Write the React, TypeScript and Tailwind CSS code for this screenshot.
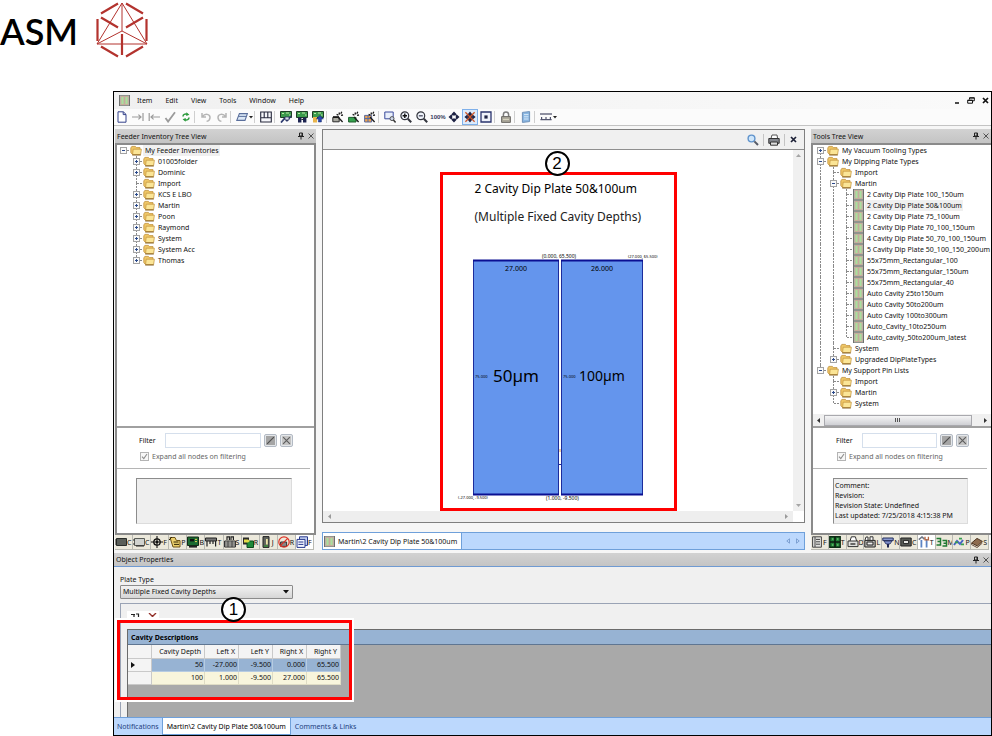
import React from "react";

type Node = {
  label: string;
  plate?: boolean;
  closed?: boolean;
  selected?: boolean;
  children?: Node[];
};

const feederTree: Node[] = [
  {
    label: "My Feeder Inventories",
    selected: true,
    children: [
      { label: "01005folder", closed: true },
      { label: "Dominic", closed: true },
      { label: "Import" },
      { label: "KCS E LBO", closed: true },
      { label: "Martin", closed: true },
      { label: "Poon", closed: true },
      { label: "Raymond", closed: true },
      { label: "System", closed: true },
      { label: "System Acc", closed: true },
      { label: "Thomas", closed: true },
    ],
  },
];

const toolsTree: Node[] = [
  { label: "My Vacuum Tooling Types", closed: true },
  {
    label: "My Dipping Plate Types",
    children: [
      { label: "Import" },
      {
        label: "Martin",
        children: [
          { label: "2 Cavity Dip Plate 100_150um", plate: true },
          { label: "2 Cavity Dip Plate 50&100um", plate: true, selected: true },
          { label: "2 Cavity Dip Plate 75_100um", plate: true },
          { label: "3 Cavity Dip Plate 70_100_150um", plate: true },
          { label: "4 Cavity Dip Plate 50_70_100_150um", plate: true },
          { label: "5 Cavity Dip Plate 50_100_150_200um", plate: true },
          { label: "55x75mm_Rectangular_100", plate: true },
          { label: "55x75mm_Rectangular_150um", plate: true },
          { label: "55x75mm_Rectangular_40", plate: true },
          { label: "Auto Cavity 25to150um", plate: true },
          { label: "Auto Cavity 50to200um", plate: true },
          { label: "Auto Cavity 100to300um", plate: true },
          { label: "Auto_Cavity_10to250um", plate: true },
          { label: "Auto_cavity_50to200um_latest", plate: true },
        ],
      },
      { label: "System" },
      { label: "Upgraded DipPlateTypes", closed: true },
    ],
  },
  {
    label: "My Support Pin Lists",
    children: [{ label: "Import" }, { label: "Martin", closed: true }, { label: "System" }],
  },
];

const columns = ["Cavity Depth", "Left X", "Left Y", "Right X", "Right Y"];
const rows = [
  ["50", "-27.000", "-9.500", "0.000", "65.500"],
  ["100", "1.000", "-9.500", "27.000", "65.500"],
];

/* ---------- icons ---------- */

function Icon({ size = 12, children }: { size?: number; children: React.ReactNode }) {
  return (
    <svg width={size} height={size} viewBox="0 0 12 12" fill="none" className="block shrink-0">
      {children}
    </svg>
  );
}

function FolderIcon() {
  return (
    <svg width="12" height="11" viewBox="0 0 12 11" className="block shrink-0">
      <path d="M.8 3 1.8 1.4h3.600l1 1.200H10v6.600H2.200L.8 7.600z" fill="#efc766" stroke="#c1923c" strokeWidth=".8" />
      <path d="M3.200 4.200h8.200L10.600 9.600H2.600z" fill="#fbe596" stroke="#c1923c" strokeWidth=".7" />
      <path d="M2.200 10h8.600" stroke="#7d5a1c" strokeWidth=".9" />
    </svg>
  );
}

function PlateIcon() {
  return (
    <svg width="11" height="11" viewBox="0 0 11 11" className="block shrink-0">
      <path d="M0 0h11v11H0z" fill="#6e706e" />
      <path d="M1 .5h9v10H1z" fill="#b3b8b0" />
      <path d="M2 1.500h3v8H2zM6 1.500h3v8H6z" fill="#a9dfa0" stroke="#d99c90" strokeWidth=".6" />
    </svg>
  );
}

function Branch({ up, down, box }: { up: boolean; down: boolean; box?: "+" | "-" }) {
  return (
    <svg width="13" height="11" viewBox="0 0 13 11" className="block shrink-0" shapeRendering="crispEdges">
      <g stroke="#8a8a8a" strokeDasharray="2 1">
        {up && <path d="M6.5 0v5.5" />}
        {down && <path d="M6.5 5v6" />}
        <path d="M6.5 5.5H13" />
      </g>
      {box && (
        <>
          <path d="M3.5 2.5h6v6h-6z" fill="#fafafa" stroke="#a3a3a3" />
          <path d="M5 5.5h3" stroke="#2b4a8c" />
          {box === "+" && <path d="M6.5 4v3" stroke="#2b4a8c" />}
        </>
      )}
    </svg>
  );
}

function Guide({ on }: { on: boolean }) {
  return (
    <svg width="13" height="11" viewBox="0 0 13 11" className="block shrink-0" shapeRendering="crispEdges">
      {on && <path d="M6.5 0v11" stroke="#8a8a8a" strokeDasharray="2 1" />}
    </svg>
  );
}

function Pin() {
  return (
    <svg width="6" height="8" viewBox="0 0 6 8" className="block" fill="none">
      <path d="M1.5 1h3v3h-3zM0 4.500h6M3 4.500V7.500" stroke="#222" />
      <path d="M4 1v3" stroke="#222" />
    </svg>
  );
}

function Cross() {
  return (
    <svg width="6" height="6" viewBox="0 0 6 6" className="block">
      <path d="m.5.5 5 5M5.5.5l-5 5" stroke="#444" strokeWidth=".9" />
    </svg>
  );
}

const wand = <path d="m6 6 4.6 5M7 1.5l.6 2M9.8.8l-1 2M4.6 3.4l1.8.8M11 4l-2 .4" stroke="#1c1c1c" strokeWidth="1.3" />;

const boardBase = (
  <>
    <path d="M.5.5h11v6H.5z" fill="#3b9b4c" stroke="#1f3d26" />
    <path d="M2 2h2v1H2zM6 1.6h3v1H6zM9 3.5h1.6v1H9z" fill="#bfe6a8" />
  </>
);

const glass = (
  <>
    <circle cx="4.8" cy="4.8" r="3.9" fill="#eef3fa" stroke="#33353d" strokeWidth="1.2" />
    <path d="m7.8 7.8 3.4 3.4" stroke="#33353d" strokeWidth="2" />
  </>
);

type Tool = { name: string; art?: React.ReactNode; menu?: boolean; active?: boolean };

const tools: (Tool | null)[] = [
  { name: "New", art: <path d="M2 .8h5.4L10 3.4v7.8H2zM7.2 1v2.6H10" fill="#fff" stroke="#33418a" strokeWidth="1" /> },
  { name: "Check in", art: <path d="M0 6h9M6.4 3.6 9 6 6.4 8.4M11 2v8" stroke="#9b9b9b" strokeWidth="1.2" /> },
  { name: "Check out", art: <path d="M3 6h9M5.6 3.6 3 6l2.6 2.4M1.2 2v8" stroke="#9b9b9b" strokeWidth="1.2" /> },
  { name: "Apply", art: <path d="m1.5 7 2.6 3.6L11 1.2" stroke="#9b9b9b" strokeWidth="1.8" /> },
  {
    name: "Refresh",
    art: (
      <>
        <path d="M3 5.4C3 3.4 5 2.6 7 3.2M9 6.6c0 2-2 2.8-4 2.2" stroke="#2b9a3c" strokeWidth="1.5" />
        <path d="M6.4 1.2 9.4 3.8 6.2 5zM5.6 10.8 2.6 8.2 5.8 7z" fill="#2b9a3c" />
      </>
    ),
  },
  null,
  { name: "Undo", art: <path d="M2 2v4h4M2.4 5.6C5 2 10 3 10 6.4c0 1.8-1.4 3.4-3.4 4" stroke="#b5b5b5" strokeWidth="1.5" /> },
  { name: "Redo", art: <path d="M10 2v4H6M9.6 5.6C7 2 2 3 2 6.4c0 1.8 1.4 3.4 3.4 4" stroke="#b5b5b5" strokeWidth="1.5" /> },
  null,
  { name: "Layers", menu: true, art: <><path d="M3.4 2.6h8L9 9.4H.8z" fill="#dce8f6" stroke="#5a6f9c" strokeWidth="1.1" /><path d="M2.4 5.4h8" stroke="#5a6f9c" /></> },
  null,
  { name: "Layout", art: <path d="M.7 1h10.6v10H.7zM.7 6.8h10.6M4.2 1v5.8M7.8 1v5.8" fill="#f6f7fb" stroke="#26283c" strokeWidth="1.1" /> },
  null,
  { name: "Board export", art: <>{boardBase}<path d="M1 11.5 5 7l2 2.5L11 5" stroke="#2d3b70" strokeWidth="1.8" /><path d="M5 6h4v3H5z" fill="#d9dced" stroke="#222c55" strokeWidth=".7" /></> },
  { name: "Board feeder", art: <>{boardBase}<path d="M2 6.5h3.4v5H2zM7 6.5h3.4v5H7z" fill="#1c2350" /><path d="M5.4 8.4H7" stroke="#111" /></> },
  { name: "Board import", art: <>{boardBase}<path d="M1 6h4v5.5H1z" fill="#e9b54b" /><path d="M6.4 11V8h-2L8 4.4 11.4 8h-2v3z" fill="#2748ad" stroke="#142666" strokeWidth=".5" /></> },
  null,
  { name: "Nozzle wizard", art: <><path d="M.8 6.4h6.4v4.4H.8z" fill="#a9a9a0" stroke="#2b2b2b" /><path d="M1 6h6" stroke="#111" strokeWidth="1.6" />{wand}</> },
  { name: "Board wizard", art: <><path d="M.6 6.4h7.4V11H.6z" fill="#35a14d" stroke="#1c5c2b" />{wand}</> },
  { name: "Table wizard", art: <><path d="M.6 4.4h7V11h-7z" fill="#eda24e" stroke="#5c6b9c" /><path d="M.8 7.6h6.6M4 4.4V11" stroke="#4d68a8" />{wand}</> },
  null,
  { name: "Zoom window", art: <><path d="M.8 1h8.4v6.8H.8z" fill="#e9effb" stroke="#3a4a9c" /><circle cx="8" cy="7.6" r="2" fill="#cdd7ea" stroke="#555" /><path d="m9.4 9 2.2 2.4" stroke="#333" strokeWidth="1.5" /></> },
  { name: "Zoom in", art: <>{glass}<path d="M2.6 4.8H7M4.8 2.6V7" stroke="#111" strokeWidth="1.4" /></> },
  { name: "Zoom out", art: <>{glass}<path d="M2.8 4.8h4" stroke="#4d4d60" strokeWidth="1.3" /></> },
  { name: "100%" },
  {
    name: "Pan",
    art: <path d="M6 .5 8.600 3.200 7.400 4.400H4.600L3.400 3.200zM6 11.500 8.600 8.800 7.400 7.600H4.600L3.400 8.800zM.5 6 3.200 3.400 4.200 4.600v2.800L3.200 8.600zM11.500 6 8.800 3.400 7.800 4.600v2.800l1 1.200z" fill="#1d2244" />,
  },
  {
    name: "Center",
    active: true,
    art: (
      <>
        <path d="M6 .4l2.4 3H3.6zM6 11.600l2.400-3H3.600zM.4 6l3-2.400v4.800zM11.600 6l-3-2.400v4.800zM3.500 3.500h5v5h-5z" fill="#1d2244" />
        <path d="m1.400 1.200 9.200 9.600M10.600 1.200 1.400 10.800" stroke="#d0582c" strokeWidth="1.300" />
      </>
    ),
  },
  { name: "Fit", art: <><path d="M1 1h10v10H1z" fill="#eef1fa" stroke="#2a346e" strokeWidth="1.3" /><path d="M4.4 4.4h3.2v3.2H4.4z" fill="#1d2244" /></> },
  null,
  { name: "Lock", art: <><path d="M3.4 6V3.6a2.6 2.6 0 0 1 5.2 0V6" stroke="#7c7c7c" strokeWidth="1.5" /><path d="M1.6 5.6h8.8v5.8H1.6z" fill="#aba79a" stroke="#6d6b66" /><path d="M3 8.4h6" stroke="#dcd8c4" /></> },
  null,
  { name: "Calculator", art: <><path d="M2.4 1.4 9.6.6v10L2.4 11.4z" fill="#8bb7e2" stroke="#6f91b8" /><path d="M4 3.6h4.4M4 5.8h4.4M4 8h4.4" stroke="#e2effa" strokeWidth=".9" /></> },
  null,
  { name: "Ruler", menu: true, art: <><path d="M0 3h12" stroke="#52556e" strokeWidth="1.3" /><path d="M.4 8.6h11.2M1.6 6v2.4M6 6v2.4M10.4 6v2.4" stroke="#52556e" strokeWidth="1.2" /></> },
];

const leftTabs: [string, React.ReactNode][] = [
  ["C", <><path d="M1.5 2.5h10v7h-10z" fill="#5b5f5a" stroke="#2a2d2a" /><path d="M0 4h1.5M0 6h1.5M0 8h1.5" stroke="#222" /></>],
  ["C", <><path d="M1.5 2.5h10v7h-10z" fill="#d0d2cf" stroke="#5a5d58" /><path d="M0 4h1.5M0 8h1.5M3 10h8" stroke="#222" /></>],
  ["F", <><circle cx="6" cy="6" r="3.2" stroke="#111" strokeWidth="1.3" /><path d="M6 0v12M0 6h12" stroke="#111" strokeWidth="1.1" /><path d="M4.8 4.8h2.4v2.4H4.8z" fill="#111" /></>],
  ["P", <><path d="M1 1.5h5l1.4 3H11v6.5H4z" fill="#ecd06c" stroke="#6e5416" /><path d="M4.5 6h5M5 8.4h5M0 4l3-3" stroke="#302505" /></>],
  ["B", <><path d="M.5 1h11v8.5H.5z" fill="#1c6b31" stroke="#132a18" /><path d="M3 3h4v2.4H3z" fill="#111" /><path d="M8 3.4h2M8 5.6h2" stroke="#e6d358" /><path d="M2 10.8h8" stroke="#222" strokeWidth="1.6" /></>],
  ["T", <><path d="M.5 2h11v3H.5z" fill="#777" stroke="#222" /><path d="M2 5v5.6M5 5v3M8 5v3M10.6 5v5.6" stroke="#222" strokeWidth="1.2" /></>],
  ["S", <><path d="M3 4V.8h2.4V4M7 4V.8h2.4V4" stroke="#222" strokeWidth="1.2" /><path d="M.6 5h10.8v6H.6z" fill="#cfcfca" stroke="#222" /><path d="M1 7h10M1 9h10M4 5v6M8 5v6" stroke="#222" strokeWidth=".7" /></>],
  ["R", <><path d="M1 1.5h6v7H1z" fill="#2a2a2a" /><path d="M5 5h6.5v6.5H5z" fill="#1f8b3a" stroke="#0b4a1b" /><path d="M2 3.6h4l2 1.4-2 1.6H2z" fill="#e4dc4a" /></>],
  ["J", <><path d="M3 .6h6v10.8H3z" fill="#62655f" stroke="#222" /><path d="M6 3h1.8v5.6H6z" fill="#efe6a6" /><path d="M4 10h4" stroke="#3b8a3a" strokeWidth="1.6" /></>],
  ["R", <><path d="M2.6 6h6v4.4h-6z" fill="#888" stroke="#333" /><circle cx="6" cy="6" r="5.2" stroke="#dd3124" strokeWidth="1.2" /><path d="M9.8 2.4 2.2 9.8" stroke="#dd3124" strokeWidth="1.2" /></>],
  ["F", <><path d="M3.5.8h8v8.6h-8z" fill="#c3d0f2" stroke="#27398c" /><path d="M1 3.4h8v8H1z" fill="#f2f5ff" stroke="#27398c" /><path d="M2.4 6h5M2.4 8.4h5" stroke="#27398c" /></>],
];

const rightTabs: [string, React.ReactNode][] = [
  ["F", <><path d="M1.6.8h8.8v10.4H1.6z" fill="#e3e3e0" stroke="#444" /><path d="M4 1v10M5 3.4h4M5 5.8h4M5 8.2h4" stroke="#444" /></>],
  ["T", <><path d="M.8.8h10.4v10.4H.8z" fill="#23813a" stroke="#0c2c14" strokeWidth="1.4" /><path d="M6 1v10M1 6h10" stroke="#0c1a10" strokeWidth="1.6" /><path d="M3 3h1.4M8 3h1.4M3 9h1.4M8 9h1.4" stroke="#8de086" /></>],
  ["D", <><path d="M3 5 4.4.8h4L9.6 5" fill="#fff" stroke="#333" /><path d="M1 5h10v5.6H1z" fill="#e0e0dd" stroke="#333" /><path d="M3.4 8h5" stroke="#333" strokeWidth="1.4" /></>],
  ["L", <><path d="M1 4 2 1h2v3M6 4V.8h3V4" fill="#fff" stroke="#333" /><path d="M.8 4.4h10.4V11H.8z" fill="#bdbdb8" stroke="#222" /><path d="M3 6h6v3H3z" fill="#eee" stroke="#222" /></>],
  ["N", <><path d="M.8 2h10.4v2.6H.8z" fill="#8a9ad0" stroke="#26305e" /><path d="M2 5h8L8 8H4z" fill="#7f8fca" stroke="#26305e" strokeWidth=".8" /><path d="M5 8h2v3.500H5z" fill="#1d2550" /></>],
  ["C", <><path d="M.8 2h10.4v8H.8z" fill="#5a5d58" stroke="#222" /><path d="M3.4 4.4h5.2v3.2H3.4z" fill="#e8e8e4" stroke="#222" /></>],
  ["T", <><path d="M3.4 4v7.4M8.6 3v8.4" stroke="#5c84c4" strokeWidth="1.8" /><path d="M.8 3.6 4 1l2.4 2.2" stroke="#6f7684" strokeWidth="1.6" /><path d="M7 .8v3h3.4V.8" stroke="#b4623c" strokeWidth="1.3" /></>],
  ["M", <><path d="M.5 2.500h4v6.500h-4M1.500 5.600h3" stroke="#1f7a33" strokeWidth="1.500" /><path d="M6.500 4.500h4v5.500h-4M7.500 7.200h3" stroke="#1f7a33" strokeWidth="1.500" /></>],
  ["P", <><path d="M1 9 4 5l3 3 3-4" stroke="#4765c4" strokeWidth="2" /><path d="M6 2.6h3M2 6.4h3M8 8.4h3" stroke="#3ba052" strokeWidth="1.8" /></>],
  ["S", <><path d="M.6 7 6 2.4l5.4 3L6.4 10z" fill="#8d6b4e" stroke="#4c3522" /><path d="M.6 7v1.6l5.6 3 5.2-4.6" stroke="#6d5240" /></>],
];

/* ---------- building blocks ---------- */

function TreeNode({ node, guides, first, last }: { node: Node; guides: boolean[]; first: boolean; last: boolean }) {
  const box = node.children ? "-" : node.closed ? "+" : undefined;
  return (
    <li>
      <div className="flex h-[11px] items-center">
        {guides.map((on, i) => (
          <Guide key={i} on={on} />
        ))}
        <Branch up={!(first && guides.length === 0)} down={!last} box={box} />
        {node.plate ? <PlateIcon /> : <FolderIcon />}
        <span className={`ml-px whitespace-nowrap pl-[2px] pr-px leading-[11px] ${node.selected ? "bg-[#f0f0f0]" : ""}`}>
          {node.label}
        </span>
      </div>
      {node.children && (
        <ul>
          {node.children.map((child, i) => (
            <TreeNode
              key={child.label}
              node={child}
              guides={[...guides, !last]}
              first={i === 0}
              last={i === node.children!.length - 1}
            />
          ))}
        </ul>
      )}
    </li>
  );
}

function Tree({ nodes }: { nodes: Node[] }) {
  return (
    <ul>
      {nodes.map((n, i) => (
        <TreeNode key={n.label} node={n} guides={[]} first={i === 0} last={i === nodes.length - 1} />
      ))}
    </ul>
  );
}

function PanelTitle({ title, className = "" }: { title: string; className?: string }) {
  return (
    <div className={`flex h-[14px] items-center gap-1 bg-gradient-to-b from-[#d2d2d2] to-[#c4c4c4] px-[2px] ${className}`}>
      <h2 className="flex-1">{title}</h2>
      <button aria-label={`Pin ${title}`}>
        <Pin />
      </button>
      <button aria-label={`Close ${title}`}>
        <Cross />
      </button>
    </div>
  );
}

function FilterArea({ id, className, children }: { id: string; className: string; children?: React.ReactNode }) {
  return (
    <div className="border-t-2 border-[#a0a0a0] pt-[4px]">
      <div className={className}>
        <div className="flex h-4 items-center">
          <label htmlFor={`${id}-filter`} className="w-[29px] pl-[3px]">
            Filter
          </label>
          <input id={`${id}-filter`} type="text" className="h-[15px] min-w-0 flex-1 border border-[#d5dfec] bg-white px-1" />
          <div className="flex w-8 justify-between pl-[3px]">
            <button aria-label="Apply filter" className="grid size-[13px] place-items-center rounded-[2px] border border-[#b3bac4] bg-[#e4e7ea]">
              <svg width="9" height="9" viewBox="0 0 8 8">
                <path d="M0 0h8v8H0z" fill="#a5a5a5" />
                <path d="M1 7 7 1" stroke="#4d4d4d" />
              </svg>
            </button>
            <button aria-label="Clear filter" className="grid size-[13px] place-items-center rounded-[2px] border border-[#b3bac4] bg-[#e4e7ea]">
              <svg width="9" height="9" viewBox="0 0 8 8">
                <path d="M0 0h8v8H0z" fill="#c4c4c4" />
                <path d="m1 1 6 6M7 1 1 7" stroke="#5d5d5d" />
              </svg>
            </button>
          </div>
        </div>
        <label className="mt-[3px] flex h-[11px] items-center gap-[3px] pl-1 text-[#666]">
          <input type="checkbox" defaultChecked className="absolute size-[9px] opacity-0" />
          <span className="grid size-[9px] place-items-center border border-[#b4b4b4] bg-[#f7f7f7]">
            <svg width="7" height="7" viewBox="0 0 7 7">
              <path d="m1 3.6 1.8 2L6 1" fill="none" stroke="#8e8e8e" strokeWidth="1.1" />
            </svg>
          </span>
          Expand all nodes on filtering
        </label>
      </div>
      <div className="mr-1 mt-[6px] border-t border-[#b5b5b5]" />
      <div className={className}>
        <div className="mb-[9px] mt-[9px] h-[46px] w-[calc(100%-1px)] border border-b-[#dcdcdc] border-l-[#8c8c8c] border-r-[#dcdcdc] border-t-[#8c8c8c] bg-[#efefef] pl-px pt-[2px]">
          {children}
        </div>
      </div>
    </div>
  );
}

function IconTabs({ items, active }: { items: [string, React.ReactNode][]; active: number }) {
  return (
    <div className="flex h-[15px] pr-[2px]">
      {items.map(([letter, art], i) => (
        <button
          key={i}
          className={`flex flex-1 items-center overflow-hidden border-b border-r border-[#b9b9b2] ${i === active ? "bg-white" : "bg-[#ece9dc]"}`}
        >
          <Icon>{art}</Icon>
          <span>{letter}</span>
        </button>
      ))}
    </div>
  );
}

function Callout({ n }: { n: number }) {
  return (
    <span className="grid size-[25px] place-items-center rounded-full border-2 border-black bg-white font-['Liberation_Sans',sans-serif] text-[17px] leading-none text-black">
      {n}
    </span>
  );
}

function Logo() {
  return (
    <header className="flex h-[91px] items-start gap-[17px]">
      <span className="mt-[9px] font-['Lato',sans-serif] text-[36px] font-semibold leading-[44px] text-black">ASM</span>
      <svg width="54" height="59" viewBox="0 0 54 59" fill="none" stroke="#b3332e">
        <path d="M27 3 2 44h50zM27 3v28L2 44M27 31l25 13" strokeWidth="1" />
        <path
          d="M6 13.5 23 3.5M31 3.5l17 10M2.5 19v22M51.5 19v22M6 46.5l17 10M48 46.5l-17 10M6 17.5l17 10M48 17.5l-17 10M27 34v21"
          strokeWidth="2.2"
        />
      </svg>
    </header>
  );
}

function PlateDrawing() {
  return (
    <svg viewBox="0 0 230 250" width="230" height="250" className="block" fontFamily="'Noto Sans', sans-serif" fill="#000">
      <g fill="#6495ed" stroke="#1c2c9c">
        <path d="M30.5 8.5h85v234h-85zM118.5 8.5h81v234h-81z" />
      </g>
      <path d="M30 8.5h86M118 8.5h82M30 242.5h86M118 242.5h82" stroke="#0a0f92" strokeWidth="2" />
      <path d="M115 212.5h4" stroke="#1c2c9c" />
      <path d="M117 197v3" stroke="#e6a04a" />
      <g fontSize="4">
        <text x="185" y="6">(27.000, 65.500)</text>
        <text x="15" y="247">(-27.000, -9.500)</text>
        <text x="32" y="126">75.000</text>
        <text x="120" y="126">75.000</text>
      </g>
      <g fontSize="5">
        <text x="99" y="6">(0.000, 65.500)</text>
        <text x="103" y="248">(1.000, -9.500)</text>
      </g>
      <g fontSize="7" textAnchor="middle">
        <text x="73" y="19">27.000</text>
        <text x="159" y="19">26.000</text>
      </g>
      <text x="50" y="130" fontSize="17">50µm</text>
      <text x="136" y="129" fontSize="14">100µm</text>
    </svg>
  );
}

/* ---------- page ---------- */

function Toolbar() {
  return (
    <div className="flex h-[17px] items-center border-b border-[#c3c3c3] bg-[#fbfbfb]">
      {tools.map((t, i) =>
        t ? (
          <button
            key={i}
            aria-label={t.name}
            className={`flex h-4 items-center justify-center ${t.menu ? "w-5" : "w-4"} ${
              t.active ? "border border-[#7fb0ea] bg-[#dcebfc]" : ""
            }`}
          >
            {t.art ? (
              <Icon>{t.art}</Icon>
            ) : (
              <span className="font-['Liberation_Sans',sans-serif] text-[6px] font-bold text-[#33385c]">{t.name}</span>
            )}
            {t.menu && (
              <svg width="4" height="3" viewBox="0 0 4 3" className="ml-px">
                <path d="M0 0h4L2 2.5z" fill="#222" />
              </svg>
            )}
          </button>
        ) : (
          <span key={i} className="mr-[3px] h-3 w-px bg-[#cfcfcf]" />
        )
      )}
    </div>
  );
}

function MenuBar() {
  return (
    <div className="flex h-[17px] items-center bg-gradient-to-r from-[#f0f0f0] to-[#fafafa] pl-[5px] pr-[2px]">
      <PlateIcon />
      <nav className="ml-[7px] flex flex-1 gap-[13px]">
        {["Item", "Edit", "View", "Tools", "Window", "Help"].map((m) => (
          <button key={m}>{m}</button>
        ))}
      </nav>
      <div className="flex items-center gap-[7px]">
        <button aria-label="Minimize">
          <svg width="6" height="7" viewBox="0 0 6 7"><path d="M1 6h4" stroke="#111" strokeWidth="1.5" /></svg>
        </button>
        <button aria-label="Restore">
          <svg width="8" height="7" viewBox="0 0 8 7" fill="none"><path d="M2.5 2.5V.8h4.8v3H6M.7 3.2h4.8v3H.7zM2.5 1h5M.7 3.4h5" stroke="#111" /></svg>
        </button>
        <button aria-label="Close">
          <svg width="7" height="7" viewBox="0 0 7 7"><path d="m1 1 5 5M6 1 1 6" stroke="#111" strokeWidth="1.7" /></svg>
        </button>
      </div>
    </div>
  );
}

function FeederPanel() {
  return (
    <section className="flex w-[202px] shrink-0 flex-col pl-px">
      <PanelTitle title="Feeder Inventory Tree View" />
      <div className="flex flex-1 flex-col border-2 border-[#8a8a8a] bg-white">
        <div className="flex-1">
          <Tree nodes={feederTree} />
        </div>
        <FilterArea id="feeder" className="ml-[19px] mr-[21px]" />
      </div>
      <IconTabs items={leftTabs} active={10} />
    </section>
  );
}

function ToolsPanel() {
  return (
    <section className="flex w-[180px] shrink-0 flex-col">
      <PanelTitle title="Tools Tree View" />
      <div className="flex flex-1 flex-col border-y-2 border-l-2 border-[#8a8a8a] bg-white">
        <div className="flex-1 overflow-hidden pl-px">
          <Tree nodes={toolsTree} />
        </div>
        <div className="flex h-3 items-center justify-between gap-1 bg-[#f0f0f0] px-1">
          <svg width="3" height="5" viewBox="0 0 3 5"><path d="M3 0v5L0 2.5z" fill="#333" /></svg>
          <span className="mr-2 grid h-[11px] flex-1 place-items-center border border-[#a9a9ae] bg-gradient-to-b from-[#f5f5f6] to-[#cfd0d4]">
            <svg width="6" height="4" viewBox="0 0 6 4"><path d="M.5 0v4M2.5 0v4M4.5 0v4" stroke="#555" /></svg>
          </span>
          <svg width="3" height="5" viewBox="0 0 3 5"><path d="M0 0v5L3 2.5z" fill="#333" /></svg>
        </div>
        <FilterArea id="tools" className="ml-[20px] mr-[22px]">
          {["Comment:", "Revision:", "Revision State: Undefined", "Last updated: 7/25/2018 4:15:38 PM"].map((l) => (
            <p key={l} className="whitespace-nowrap leading-[10px]">{l}</p>
          ))}
        </FilterArea>
      </div>
      <IconTabs items={rightTabs} active={6} />
    </section>
  );
}

function Viewer() {
  return (
    <section className="flex min-w-0 flex-1 flex-col">
      <div className="flex flex-1 flex-col border border-[#7f7f7f] bg-white">
        <div className="flex h-5 items-center justify-end gap-1 border-b border-[#8f8f8f] bg-[#f0f0f0] pr-[7px]">
          <button aria-label="Find">
            <Icon>
              <circle cx="4.5" cy="4.5" r="3.4" fill="#cfe6fa" stroke="#5f93cc" strokeWidth="1.4" />
              <path d="m7.4 7.4 3.6 3.6" stroke="#555a66" strokeWidth="2" />
            </Icon>
          </button>
          <span className="h-3 w-px bg-[#c4c4c4]" />
          <button aria-label="Print">
            <Icon>
              <path d="M3 4.5 4 1h5l.6 3.500" fill="#fff" stroke="#555" />
              <path d="M.8 4.5h10.4v4.8H.8z" fill="#84878e" stroke="#333" />
              <path d="M2.5 8h7v3.2h-7z" fill="#ddd" stroke="#333" />
            </Icon>
          </button>
          <span className="h-3 w-px bg-[#c4c4c4]" />
          <button aria-label="Close view" className="ml-px">
            <svg width="7" height="7" viewBox="0 0 7 7"><path d="m1 1 5 5M6 1 1 6" stroke="#1c2036" strokeWidth="1.7" /></svg>
          </button>
        </div>
        <div className="flex flex-1">
          <div className="flex flex-1 justify-center pt-[22px]">
            <div className="relative w-[237px] border-[3px] border-[#ff0000] pl-[32px]">
              <div className="absolute -top-[24px] left-[102px]">
                <Callout n={2} />
              </div>
              <p className="mt-[5px] whitespace-nowrap text-[12px] leading-[18px] text-black">2 Cavity Dip Plate 50&amp;100um</p>
              <p className="mt-[10px] whitespace-nowrap text-[12px] leading-[18px] text-[#222]">(Multiple Fixed Cavity Depths)</p>
              <div className="-ml-[32px] mt-[26px]">
                <PlateDrawing />
              </div>
              <div className="h-[5px]" />
            </div>
          </div>
          <div className="flex w-[11px] flex-col items-center justify-between bg-[#f0f0f0] py-1">
            <svg width="5" height="3" viewBox="0 0 5 3"><path d="M0 3h5L2.5 0z" fill="#a5a5a5" /></svg>
            <svg width="5" height="3" viewBox="0 0 5 3"><path d="M0 0h5L2.5 3z" fill="#a5a5a5" /></svg>
          </div>
        </div>
        <div className="mr-[11px] flex h-[11px] items-center justify-between bg-[#eeeeee] px-[5px]">
          <svg width="3" height="5" viewBox="0 0 3 5"><path d="M3 0v5L0 2.5z" fill="#9a9a9a" /></svg>
          <svg width="3" height="5" viewBox="0 0 3 5"><path d="M0 0v5L3 2.5z" fill="#9a9a9a" /></svg>
        </div>
      </div>
      <div className="mt-[9px] flex h-[18px] items-center justify-between border border-[#6fa0da] bg-[#bcd8fd] pr-1">
        <button className="flex h-4 items-center gap-[3px] border-r border-[#6fa0da] bg-white pl-px pr-1">
          <PlateIcon />
          Martin\2 Cavity Dip Plate 50&amp;100um
        </button>
        <svg width="14" height="6" viewBox="0 0 14 6" fill="none"><path d="M3.5.8v4.400L.8 3zM10.500.8v4.400L13.200 3z" stroke="#6f93c8" strokeWidth=".8" /></svg>
      </div>
    </section>
  );
}

function CavityTable() {
  return (
    <table className="border-separate border-spacing-0 bg-white">
      <thead>
        <tr className="h-[14px]">
          <th className="w-6 border-b border-r border-[#c9c9c9] bg-[#f4f4f4]" />
          {columns.map((c, i) => (
            <th
              key={c}
              className={`border-b border-r border-[#c9c9c9] bg-[#f4f4f4] px-[3px] py-0 text-right font-normal leading-[12px] ${
                i === 0 ? "w-[53px]" : "w-[34px]"
              }`}
            >
              {c}
            </th>
          ))}
        </tr>
      </thead>
      <tbody>
        {rows.map((r, i) => (
          <tr key={i} className="h-[13px]">
            <td className="border-b border-r border-[#c9c9c9] bg-[#f4f4f4] p-0 pl-[3px]">
              {i === 0 && (
                <svg width="4" height="6" viewBox="0 0 4 6" className="block"><path d="M0 0v6l4-3z" fill="#111" /></svg>
              )}
            </td>
            {r.map((v, j) => (
              <td
                key={j}
                className={`border-b border-r px-px py-0 text-right leading-[12px] ${
                  i === 0 ? "border-[#b6cbe2] bg-[#97b3d3]" : "border-[#dfdcc4] bg-[#f8f5dc]"
                }`}
              >
                {v}
              </td>
            ))}
          </tr>
        ))}
      </tbody>
    </table>
  );
}

function PropertiesPanel() {
  return (
    <section>
      <PanelTitle title="Object Properties" className="border-b border-[#6f9ad2]" />
      <div className="bg-[#f0f0f0] pl-[6px] pt-[7px]">
        <label htmlFor="plate-type" className="block leading-[11px]">
          Plate Type
        </label>
        <div className="relative w-[173px]">
          <select
            id="plate-type"
            className="block h-[14px] w-full appearance-none rounded-[1px] border border-[#8b8b8b] bg-gradient-to-b from-[#f2f2f2] to-[#d6d6d6] pl-[2px] leading-[12px]"
          >
            <option>Multiple Fixed Cavity Depths</option>
          </select>
          <svg width="6" height="4" viewBox="0 0 6 4" className="pointer-events-none absolute right-1 top-[5px]">
            <path d="M0 0h6L3 3.5z" fill="#111" />
          </svg>
        </div>
        <div className="relative mt-1 border-l border-t border-[#9aa3b5] pl-[6px]">
          <div className="flex h-[25px] items-end">
            <div className="mb-[8px] flex h-[10px] w-8 items-end gap-2 overflow-hidden bg-white pb-[4px] pl-1">
              <svg width="9" height="4" viewBox="0 0 9 4" fill="none"><path d="M0 1.500h4M5 1h2.500v3M3 4V2" stroke="#222" strokeWidth="1.2" /></svg>
              <svg width="9" height="4" viewBox="0 0 9 4"><path d="m1 0 4 4M8 0 4 4" stroke="#93312a" strokeWidth="1.4" /></svg>
            </div>
          </div>
          <div className="h-[88px] border-l border-t border-[#6b6b6b] bg-[#a9a9a9]">
            <h3 className="h-[15px] border-b border-[#5f7692] bg-[#97b3d3] pl-[3px] font-bold leading-[15px] text-black">
              Cavity Descriptions
            </h3>
            <CavityTable />
          </div>
          <div className="absolute -left-[4px] top-[16px] h-[80px] w-[235px] border-[3px] border-[#ff0000] outline-2 outline-white" />
          <div className="absolute -top-[7px] left-[100px]">
            <Callout n={1} />
          </div>
        </div>
      </div>
      <div className="flex h-[18px] border-t border-[#6fa0da] bg-[#bcd8fd] text-[#1c3e80]">
        <button className="px-[3px]">Notifications</button>
        <button className="border-x border-b border-[#6fa0da] bg-white px-1 text-black">Martin\2 Cavity Dip Plate 50&amp;100um</button>
        <button className="px-1">Comments &amp; Links</button>
      </div>
    </section>
  );
}

export default function App() {
  return (
    <div className="min-h-screen bg-white font-['Noto_Sans',sans-serif] text-[7px] leading-[11px] text-[#111]">
      <Logo />
      <main className="ml-[113px] border border-black bg-[#f6f6f6]">
        <MenuBar />
        <Toolbar />
        <div className="flex h-[424px] items-stretch gap-[6px] pt-[3px]">
          <FeederPanel />
          <Viewer />
          <ToolsPanel />
        </div>
        <div className="h-[3px]" />
        <PropertiesPanel />
      </main>
    </div>
  );
}
